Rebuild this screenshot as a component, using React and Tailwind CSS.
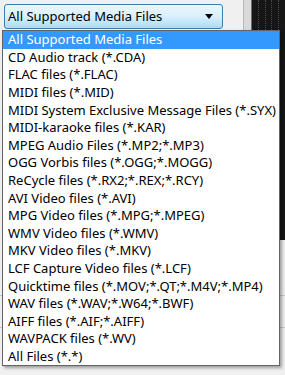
import React from "react";

const items = [
  "All Supported Media Files",
  "CD Audio track (*.CDA)",
  "FLAC files (*.FLAC)",
  "MIDI files (*.MID)",
  "MIDI System Exclusive Message Files (*.SYX)",
  "MIDI-karaoke files (*.KAR)",
  "MPEG Audio Files (*.MP2;*.MP3)",
  "OGG Vorbis files (*.OGG;*.MOGG)",
  "ReCycle files (*.RX2;*.REX;*.RCY)",
  "AVI Video files (*.AVI)",
  "MPG Video files (*.MPG;*.MPEG)",
  "WMV Video files (*.WMV)",
  "MKV Video files (*.MKV)",
  "LCF Capture Video files (*.LCF)",
  "Quicktime files (*.MOV;*.QT;*.M4V;*.MP4)",
  "WAV files (*.WAV;*.W64;*.BWF)",
  "AIFF files (*.AIF;*.AIFF)",
  "WAVPACK files (*.WV)",
  "All Files (*.*)",
];

export default function App() {
  return (
    <div
      className="relative w-[285px] h-[375px] overflow-hidden bg-[#f0f0f0]"
      style={{ fontFamily: '"Noto Sans", "Open Sans", sans-serif' }}
    >
      {/* background right-side panel */}
      <div className="absolute top-0 left-[243px] w-[42px] h-[240px] flex">
        <div className="w-[1px] bg-[#b8b8b8]" />
        <div className="w-[7px] bg-[#d9d9d9]" />
        <div className="w-[1px] bg-[#6a6a6a]" />
        <div className="flex-1 bg-[#161616] flex justify-around px-[3px]">
          <div className="w-[1px] border-l border-dotted border-[#4a4a4a]" />
          <div className="w-[1px] border-l border-dotted border-[#4a4a4a]" />
          <div className="w-[1px] border-l border-dotted border-[#4a4a4a]" />
          <div className="w-[1px] border-l border-dotted border-[#4a4a4a]" />
        </div>
      </div>
      <div className="absolute left-0 right-0 top-[295px] h-[1px] bg-[#c8c8c8]" />
      <div className="absolute left-0 right-0 top-[327px] h-[1px] bg-[#c8c8c8]" />

      {/* combobox */}
      <div className="absolute left-[4px] top-[4px] w-[219px] h-[25px] rounded-[3px] border border-[#3c7fb1] bg-gradient-to-b from-[#eaf6fd] via-[#d9f0fc] to-[#a9dbf6] flex items-center pl-[3px] pr-[8px]">
        <span className="flex-1 text-[13px] text-black leading-none whitespace-nowrap">
          All Supported Media Files
        </span>
        <svg width="8" height="5" viewBox="0 0 8 5" className="mr-[1px]">
          <path d="M0 0 H8 L4 5 Z" fill="#000" />
        </svg>
      </div>

      {/* dropdown list */}
      <div className="absolute left-[2px] top-[30px] w-[278px] border border-[#646464] bg-white shadow-[2px_2px_3px_rgba(0,0,0,0.35)]">
        {items.map((t, i) => (
          <div
            key={i}
            className={
              i === 0
                ? "h-[17.6px] flex items-center pl-[5px] bg-[#3399ff] text-white text-[13px] leading-none whitespace-nowrap"
                : "h-[17.6px] flex items-center pl-[5px] text-black text-[13px] leading-none whitespace-nowrap"
            }
          >
            {t}
          </div>
        ))}
      </div>
    </div>
  );
}
